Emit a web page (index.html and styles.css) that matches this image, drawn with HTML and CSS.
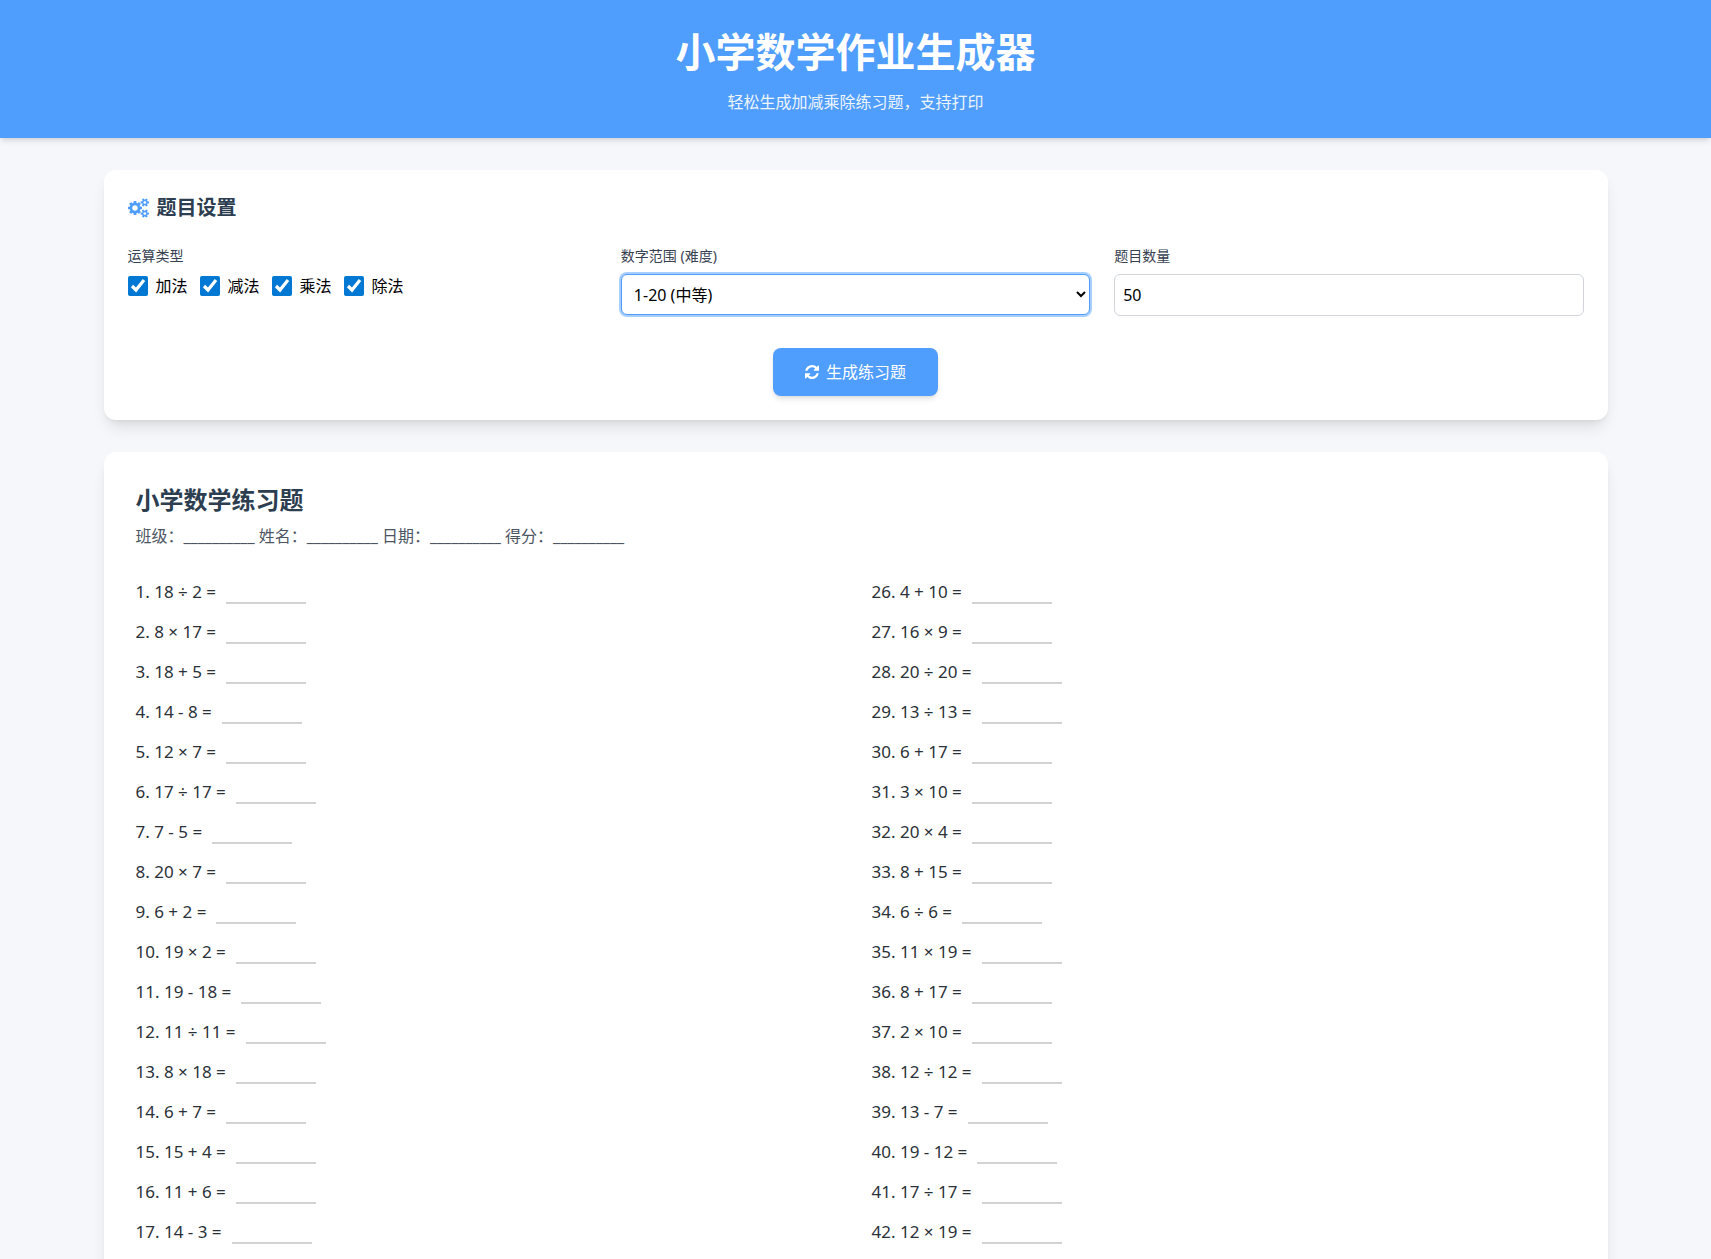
FILE: index.html
```html
<!DOCTYPE html>
<html lang="zh-CN">

<head>
  <meta charset="UTF-8">
  <meta name="viewport" content="width=device-width, initial-scale=1.0">
  <title>小学数学作业生成器</title>
  <link rel="stylesheet" href="styles.css">
</head>

<body>
  <header class="header">
    <h1>小学数学作业生成器</h1>
    <p>轻松生成加减乘除练习题，支持打印</p>
  </header>

  <main class="container">
    <!-- 题目设置 -->
    <section class="card settings">
      <h2 class="card-title">
        <svg class="icon-cogs" viewBox="0 0 1920 1792" aria-hidden="true">
          <path d="M896 896q0-106-75-181t-181-75-181 75-75 181 75 181 181 75 181-75 75-181zm768 512q0-52-38-90t-90-38-90 38-38 90q0 53 37.5 90.5t90.5 37.5 90.5-37.5 37.5-90.5zm0-1024q0-52-38-90t-90-38-90 38-38 90q0 53 37.5 90.5t90.5 37.5 90.5-37.5 37.5-90.5zm-384 421v185q0 10-7 19.5t-16 10.5l-155 24q-11 35-32 76 34 48 90 115 7 11 7 20 0 12-7 19-23 30-82.5 89.5t-78.5 59.5q-11 0-21-7l-115-90q-37 19-77 31-11 108-23 155-7 24-30 24h-186q-11 0-20-7.5t-10-17.5l-23-153q-34-10-75-31l-118 89q-7 7-20 7-11 0-21-8-144-133-144-160 0-9 7-19 10-14 41-53t47-61q-23-44-35-82l-152-24q-10-1-17-9.5t-7-19.5v-185q0-10 7-19.5t16-10.5l155-24q11-35 32-76-34-48-90-115-7-11-7-20 0-12 7-20 22-30 82-89t79-59q11 0 21 7l115 90q34-18 77-32 11-108 23-154 7-24 30-24h186q11 0 20 7.5t10 17.5l23 153q34 10 75 31l118-89q8-7 20-7 11 0 21 8 144 133 144 160 0 8-7 19-12 16-42 54t-45 60q23 48 34 82l152 23q10 2 17 10.5t7 19.5zm640 533v140q0 16-149 31-12 27-30 52 51 113 51 138 0 4-4 7-122 71-124 71-8 0-46-47t-52-68q-20 2-30 2t-30-2q-14 21-52 68t-46 47q-2 0-124-71-4-3-4-7 0-25 51-138-18-25-30-52-149-15-149-31v-140q0-16 149-31 13-29 30-52-51-113-51-138 0-4 4-7 4-2 35-20t59-34 30-16q8 0 46 46.5t52 67.5q20-2 30-2t30 2q51-71 92-112l6-2q4 0 124 70 4 3 4 7 0 25-51 138 17 23 30 52 149 15 149 31zm0-1024v140q0 16-149 31-12 27-30 52 51 113 51 138 0 4-4 7-122 71-124 71-8 0-46-47t-52-68q-20 2-30 2t-30-2q-14 21-52 68t-46 47q-2 0-124-71-4-3-4-7 0-25 51-138-18-25-30-52-149-15-149-31v-140q0-16 149-31 13-29 30-52-51-113-51-138 0-4 4-7 4-2 35-20t59-34 30-16q8 0 46 46.5t52 67.5q20-2 30-2t30 2q51-71 92-112l6-2q4 0 124 70 4 3 4 7 0 25-51 138 17 23 30 52 149 15 149 31z" />
        </svg>
        题目设置
      </h2>

      <div class="form-grid">
        <div role="group" aria-labelledby="type-label">
          <span class="form-label" id="type-label">运算类型</span>
          <div class="checks">
            <label><input type="checkbox" checked>加法</label>
            <label><input type="checkbox" checked>减法</label>
            <label><input type="checkbox" checked>乘法</label>
            <label><input type="checkbox" checked>除法</label>
          </div>
        </div>
        <div>
          <label class="form-label" for="range">数字范围 (难度)</label>
          <select class="form-control" id="range" autofocus>
            <option>1-20 (中等)</option>
          </select>
        </div>
        <div>
          <label class="form-label" for="count">题目数量</label>
          <input class="form-control" type="number" id="count" value="50">
        </div>
      </div>

      <div class="actions">
        <button type="button" class="btn">
          <svg class="icon-refresh" viewBox="128 128 1536 1536" aria-hidden="true">
            <path d="M1639 1056q0 5-1 7-64 268-268 434.5t-478 166.5q-146 0-282.5-55t-243.5-157l-129 129q-19 19-45 19t-45-19-19-45v-448q0-26 19-45t45-19h448q26 0 45 19t19 45-19 45l-137 137q71 66 161 102t187 36q134 0 250-65t186-179q11-17 53-117 8-23 30-23h192q13 0 22.5 9.5t9.5 22.5zm25-800v448q0 26-19 45t-45 19h-448q-26 0-45-19t-19-45 19-45l138-138q-148-137-349-137-134 0-250 65t-186 179q-11 17-53 117-8 23-30 23h-199q-13 0-22.5-9.5t-9.5-22.5v-7q65-268 270-434.5t480-166.5q146 0 284 55.5t245 156.5l130-129q19-19 45-19t45 19 19 45z" />
          </svg>
          生成练习题
        </button>
      </div>
    </section>

    <!-- 练习题 -->
    <section class="card sheet">
      <h2 class="sheet-title">小学数学练习题</h2>
      <p class="sheet-info">班级：__________ 姓名：__________ 日期：__________ 得分：__________</p>

      <div class="problems">
        <ul>
          <li>1. 18 ÷ 2 = <span class="blank"></span></li>
          <li>2. 8 × 17 = <span class="blank"></span></li>
          <li>3. 18 + 5 = <span class="blank"></span></li>
          <li>4. 14 - 8 = <span class="blank"></span></li>
          <li>5. 12 × 7 = <span class="blank"></span></li>
          <li>6. 17 ÷ 17 = <span class="blank"></span></li>
          <li>7. 7 - 5 = <span class="blank"></span></li>
          <li>8. 20 × 7 = <span class="blank"></span></li>
          <li>9. 6 + 2 = <span class="blank"></span></li>
          <li>10. 19 × 2 = <span class="blank"></span></li>
          <li>11. 19 - 18 = <span class="blank"></span></li>
          <li>12. 11 ÷ 11 = <span class="blank"></span></li>
          <li>13. 8 × 18 = <span class="blank"></span></li>
          <li>14. 6 + 7 = <span class="blank"></span></li>
          <li>15. 15 + 4 = <span class="blank"></span></li>
          <li>16. 11 + 6 = <span class="blank"></span></li>
          <li>17. 14 - 3 = <span class="blank"></span></li>
        </ul>
        <ul>
          <li>26. 4 + 10 = <span class="blank"></span></li>
          <li>27. 16 × 9 = <span class="blank"></span></li>
          <li>28. 20 ÷ 20 = <span class="blank"></span></li>
          <li>29. 13 ÷ 13 = <span class="blank"></span></li>
          <li>30. 6 + 17 = <span class="blank"></span></li>
          <li>31. 3 × 10 = <span class="blank"></span></li>
          <li>32. 20 × 4 = <span class="blank"></span></li>
          <li>33. 8 + 15 = <span class="blank"></span></li>
          <li>34. 6 ÷ 6 = <span class="blank"></span></li>
          <li>35. 11 × 19 = <span class="blank"></span></li>
          <li>36. 8 + 17 = <span class="blank"></span></li>
          <li>37. 2 × 10 = <span class="blank"></span></li>
          <li>38. 12 ÷ 12 = <span class="blank"></span></li>
          <li>39. 13 - 7 = <span class="blank"></span></li>
          <li>40. 19 - 12 = <span class="blank"></span></li>
          <li>41. 17 ÷ 17 = <span class="blank"></span></li>
          <li>42. 12 × 19 = <span class="blank"></span></li>
        </ul>
      </div>
    </section>
  </main>
</body>

</html>
```

FILE: styles.css
```css
* {
  box-sizing: border-box;
  margin: 0;
  padding: 0;
}

body {
  background: #f5f7fa;
  color: #000;
  font-family: "Noto Sans", "Noto Sans CJK SC", sans-serif;
  font-size: 16px;
  line-height: 24px;
}

ul {
  list-style: none;
}

/* 顶部 */
.header {
  padding: 24px 16px;
  background: #4f9dfd;
  color: #fff;
  text-align: center;
  box-shadow: 0 4px 6px -1px rgba(0, 0, 0, 0.1), 0 2px 4px -2px rgba(0, 0, 0, 0.1);
}

.header h1 {
  font-size: 40px;
  line-height: 56px;
}

.header p {
  margin-top: 10px;
  opacity: 0.9;
}

.container {
  max-width: 1536px;
  margin: 0 auto;
  padding: 32px 16px;
}

.card {
  background: #fff;
  border-radius: 12px;
  box-shadow: 0 10px 15px -3px rgba(0, 0, 0, 0.1), 0 4px 6px -4px rgba(0, 0, 0, 0.1);
}

/* 题目设置 */
.settings {
  margin-bottom: 32px;
  padding: 24px;
}

.card-title {
  display: flex;
  align-items: center;
  gap: 8px;
  margin-bottom: 24px;
  color: #2c3e50;
  font-size: 20px;
  line-height: 28px;
}

.icon-cogs {
  width: 21px;
  height: 20px;
  fill: #4f9dfd;
}

.form-grid {
  display: grid;
  grid-template-columns: repeat(3, 1fr);
  gap: 24px;
}

.form-label {
  display: block;
  margin-bottom: 8px;
  color: #374151;
  font-size: 14px;
  line-height: 20px;
}

.checks {
  display: flex;
  flex-wrap: wrap;
  gap: 12px;
}

.checks label {
  display: flex;
  align-items: center;
  gap: 8px;
}

.checks input {
  width: 20px;
  height: 20px;
  accent-color: #0078d4;
}

.form-control {
  display: block;
  width: 100%;
  height: 42px;
  padding: 8px;
  border: 1px solid #d1d5db;
  border-radius: 6px;
  background: #fff;
  color: #000;
  font: inherit;
}

select.form-control {
  height: 41px;
}

.form-control:focus {
  outline: none;
  border-color: #4f9dfd;
  box-shadow: 0 0 0 2px rgba(79, 157, 253, 0.5);
}

.actions {
  margin-top: 32px;
  text-align: center;
}

.btn {
  display: inline-flex;
  align-items: center;
  gap: 7px;
  padding: 12px 32px;
  border: none;
  border-radius: 8px;
  background: #4f9dfd;
  color: #fff;
  font: inherit;
  vertical-align: top;
  box-shadow: 0 4px 6px -1px rgba(0, 0, 0, 0.1), 0 2px 4px -2px rgba(0, 0, 0, 0.1);
}

.icon-refresh {
  width: 14px;
  height: 14px;
  fill: currentColor;
}

/* 练习题 */
.sheet {
  padding: 32px;
}

.sheet-title {
  margin-bottom: 8px;
  color: #2c3e50;
  font-size: 24px;
  line-height: 32px;
}

.sheet-info {
  margin-bottom: 24px;
  color: #4b5563;
}

.problems {
  display: grid;
  grid-template-columns: repeat(2, 1fr);
  gap: 32px;
}

.problems li {
  display: flex;
  align-items: center;
  gap: 10px;
  height: 40px;
  color: #2b3138;
  font-size: 17px;
}

/* 答题横线 */
.blank {
  width: 80px;
  height: 24px;
  border-bottom: 2px solid #d1d3d5;
}
```
